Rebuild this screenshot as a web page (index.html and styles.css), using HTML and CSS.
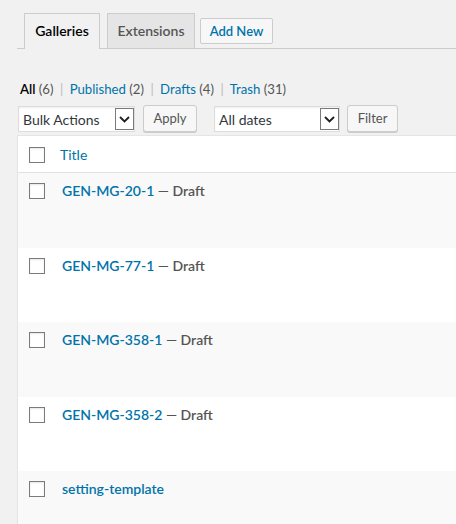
FILE: index.html
```html
<!DOCTYPE html>
<html>
<head>
<meta charset="utf-8">
<link rel="stylesheet" href="styles.css">
</head>
<body>
<div class="wrap">
  <div class="tabs">
    <a class="tab active">Galleries</a>
    <a class="tab">Extensions</a>
    <a class="add">Add New</a>
  </div>
  <div class="subsub">
    <span class="current">All</span> <span class="count">(6)</span> <span class="sep">|</span>
    <a>Published</a> <span class="count">(2)</span> <span class="sep">|</span>
    <a>Drafts</a> <span class="count">(4)</span> <span class="sep">|</span>
    <a>Trash</a> <span class="count">(31)</span>
  </div>
  <div class="toolbar">
    <div class="select bulk"><span>Bulk Actions</span><span class="arrow"><svg width="11" height="7" viewBox="0 0 11 7"><polyline points="1,1 5.5,5.5 10,1" fill="none" stroke="#1e1e1e" stroke-width="1.8"/></svg></span></div>
    <div class="button apply">Apply</div>
    <div class="select dates"><span>All dates</span><span class="arrow"><svg width="11" height="7" viewBox="0 0 11 7"><polyline points="1,1 5.5,5.5 10,1" fill="none" stroke="#1e1e1e" stroke-width="1.8"/></svg></span></div>
    <div class="button filter">Filter</div>
  </div>
  <div class="list">
    <div class="head">
      <div class="cb"><span class="check"></span></div>
      <a class="col-title">Title</a>
    </div>
    <div class="row alt">
      <div class="cb"><span class="check"></span></div>
      <div class="title"><a>GEN-MG-20-1</a> <span class="state">— Draft</span></div>
    </div>
    <div class="row">
      <div class="cb"><span class="check"></span></div>
      <div class="title"><a>GEN-MG-77-1</a> <span class="state">— Draft</span></div>
    </div>
    <div class="row alt">
      <div class="cb"><span class="check"></span></div>
      <div class="title"><a>GEN-MG-358-1</a> <span class="state">— Draft</span></div>
    </div>
    <div class="row">
      <div class="cb"><span class="check"></span></div>
      <div class="title"><a>GEN-MG-358-2</a> <span class="state">— Draft</span></div>
    </div>
    <div class="row alt">
      <div class="cb"><span class="check"></span></div>
      <div class="title"><a>setting-template</a></div>
    </div>
  </div>
</div>
</body>
</html>
```
FILE: styles.css
```css
html, body {
  margin: 0;
  padding: 0;
  background: #f1f1f1;
  overflow: hidden;
}
body {
  font-family: Lato, "Open Sans", sans-serif;
  font-size: 13px;
  color: #444;
}
.wrap {
  padding-left: 17px;
}
.tabs {
  display: flex;
  align-items: flex-start;
  margin-top: 13px;
  height: 35px;
  border-bottom: 1px solid #ccc;
  padding-left: 7px;
}
.tab {
  box-sizing: border-box;
  height: 35px;
  border: 1px solid #ccc;
  border-bottom: none;
  padding: 5px 0;
  line-height: 24px;
  font-size: 14px;
  font-weight: 600;
  text-align: center;
  color: #555;
  background: #e5e5e5;
}
.tab.active {
  height: 36px;
  width: 76px;
  margin-right: 7px;
  background: #f1f1f1;
  color: #000;
}
.tab:not(.active) {
  width: 88px;
  margin-right: 5px;
}
.add {
  box-sizing: border-box;
  margin-top: 5px;
  height: 26px;
  width: 73px;
  text-align: center;
  border: 1px solid #ccc;
  border-radius: 2px;
  background: #f7f7f7;
  line-height: 24px;
  font-weight: 600;
  font-size: 13px;
  color: #0073aa;
}
.subsub {
  margin-top: 27px;
  height: 26px;
  line-height: 26px;
  padding-left: 3px;
  font-size: 13.2px;
  color: #555;
}
.subsub a {
  color: #0073aa;
}
.subsub .current {
  color: #000;
  font-weight: 600;
}
.subsub .sep {
  color: #bbb;
  padding: 0 3px;
}
.toolbar {
  display: flex;
  align-items: flex-start;
  margin-top: 3px;
  height: 28px;
}
.select {
  box-sizing: border-box;
  height: 26px;
  margin-top: 1px;
  background: #fff;
  border: 1px solid #ddd;
  box-shadow: inset 0 1px 2px rgba(0, 0, 0, 0.07);
  display: flex;
  align-items: center;
  padding-left: 4px;
  font-size: 14px;
  color: #32373c;
}
.select .arrow {
  margin-left: auto;
  box-sizing: border-box;
  width: 19px;
  height: 22px;
  border: 1px solid #7a7a7a;
  background: #fff;
  display: flex;
  align-items: center;
  justify-content: center;
}
.bulk {
  margin-left: 1px;
  width: 117px;
}
.dates {
  margin-left: 17px;
  width: 126px;
}
.button {
  box-sizing: border-box;
  height: 27px;
  border: 1px solid #ccc;
  border-radius: 3px;
  background: #f7f7f7;
  box-shadow: 0 1px 0 #ccc;
  color: #555;
  font-size: 13px;
  line-height: 25px;
  text-align: center;
}
.apply {
  margin-left: 8px;
  width: 54px;
}
.filter {
  margin-left: 7px;
  width: 51px;
}
.list {
  margin-top: 2px;
  width: 460px;
  border: 1px solid #e5e5e5;
  border-right: none;
  background: #fff;
  box-shadow: 0 1px 1px rgba(0, 0, 0, 0.04);
}
.head {
  display: flex;
  height: 36px;
  border-bottom: 1px solid #e1e1e1;
  background: #fff;
}
.row {
  display: flex;
  height: 74.6px;
  background: #fff;
}
.row.alt {
  background: #f9f9f9;
}
.cb {
  width: 44px;
  padding-left: 11px;
  box-sizing: border-box;
}
.head .cb {
  padding-top: 11px;
}
.row .cb {
  padding-top: 10px;
}
.check {
  display: block;
  box-sizing: border-box;
  width: 16px;
  height: 16px;
  border: 1px solid #7a7a7a;
  background: #fff;
  box-shadow: inset 0 1px 2px rgba(0, 0, 0, 0.1);
}
.col-title {
  padding-top: 9px;
  line-height: 20px;
  font-size: 14px;
  color: #0073aa;
  margin-left: -2px;
}
.title {
  padding-top: 8px;
  line-height: 20px;
  font-size: 14px;
  font-weight: 600;
}
.title a {
  color: #0073aa;
}
.title .state {
  color: #555;
}
```
